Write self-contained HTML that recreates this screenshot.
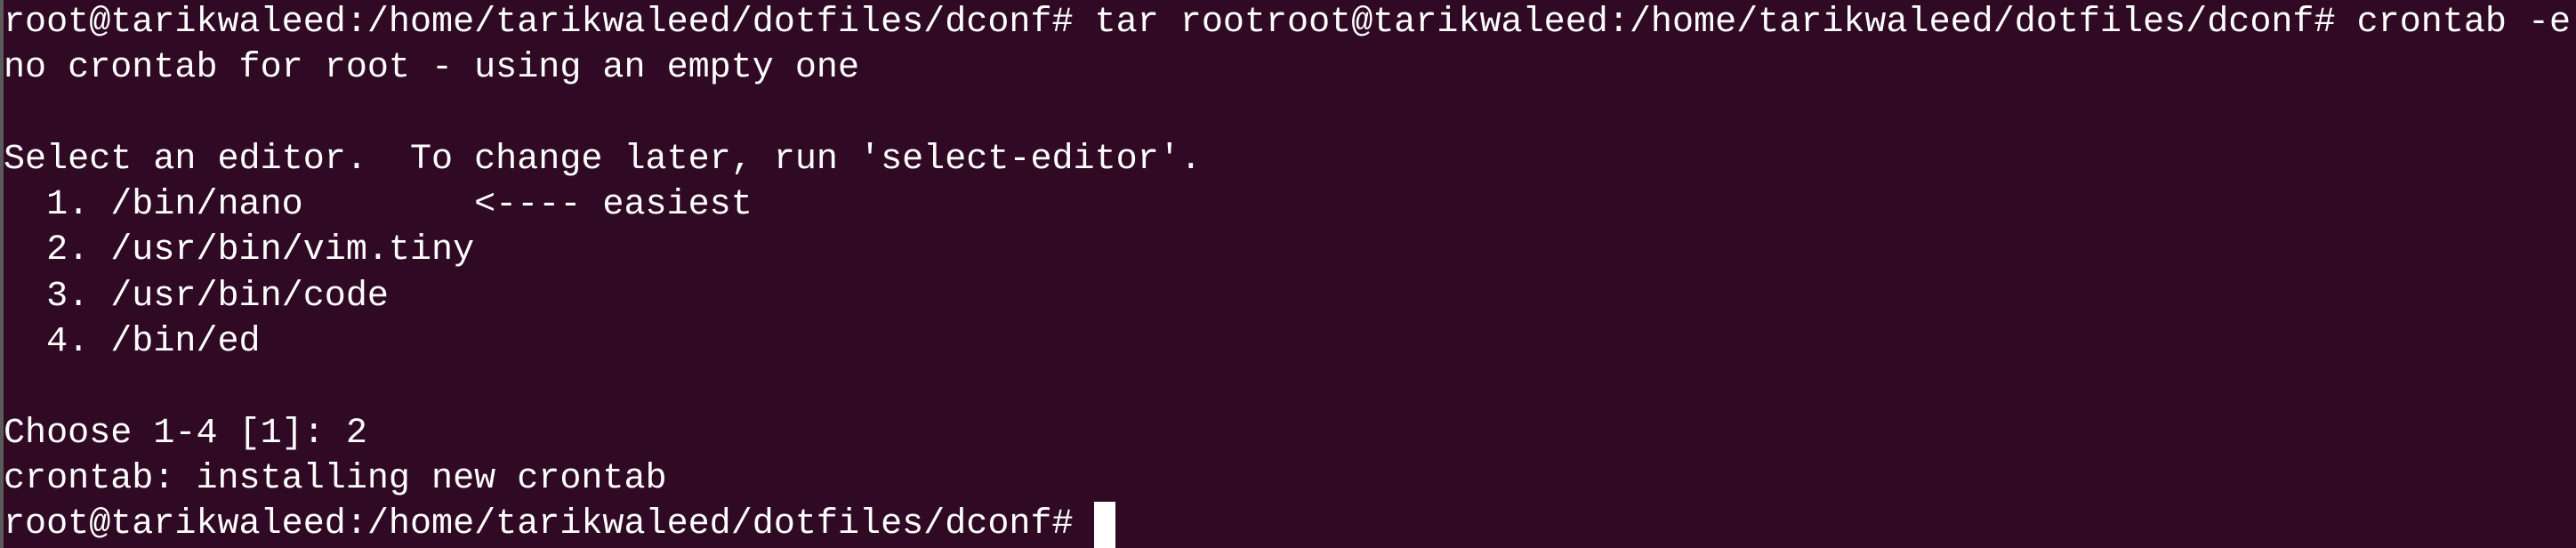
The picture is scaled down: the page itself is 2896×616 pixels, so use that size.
<!DOCTYPE html>
<html><head><meta charset="utf-8"><style>
html,body{margin:0;padding:0;}
body{width:2896px;height:616px;background:#300a24;overflow:hidden;position:relative;}
.bl{position:absolute;left:0;top:0;width:4px;height:616px;background:#5a5a5a;}
pre{position:absolute;left:4px;top:0;margin:0;font-family:"Liberation Mono",monospace;font-size:40.1px;line-height:51.3px;color:#ffffff;white-space:pre;letter-spacing:0;}
.cur{position:absolute;left:1230px;top:564px;width:24px;height:52px;background:#fff;}
</style></head><body>
<div class="bl"></div>
<pre>root@tarikwaleed:/home/tarikwaleed/dotfiles/dconf# tar rootroot@tarikwaleed:/home/tarikwaleed/dotfiles/dconf# crontab -e
no crontab for root - using an empty one

Select an editor.  To change later, run 'select-editor'.
  1. /bin/nano        &lt;---- easiest
  2. /usr/bin/vim.tiny
  3. /usr/bin/code
  4. /bin/ed

Choose 1-4 [1]: 2
crontab: installing new crontab
root@tarikwaleed:/home/tarikwaleed/dotfiles/dconf# </pre>
<div class="cur"></div>
</body></html>
